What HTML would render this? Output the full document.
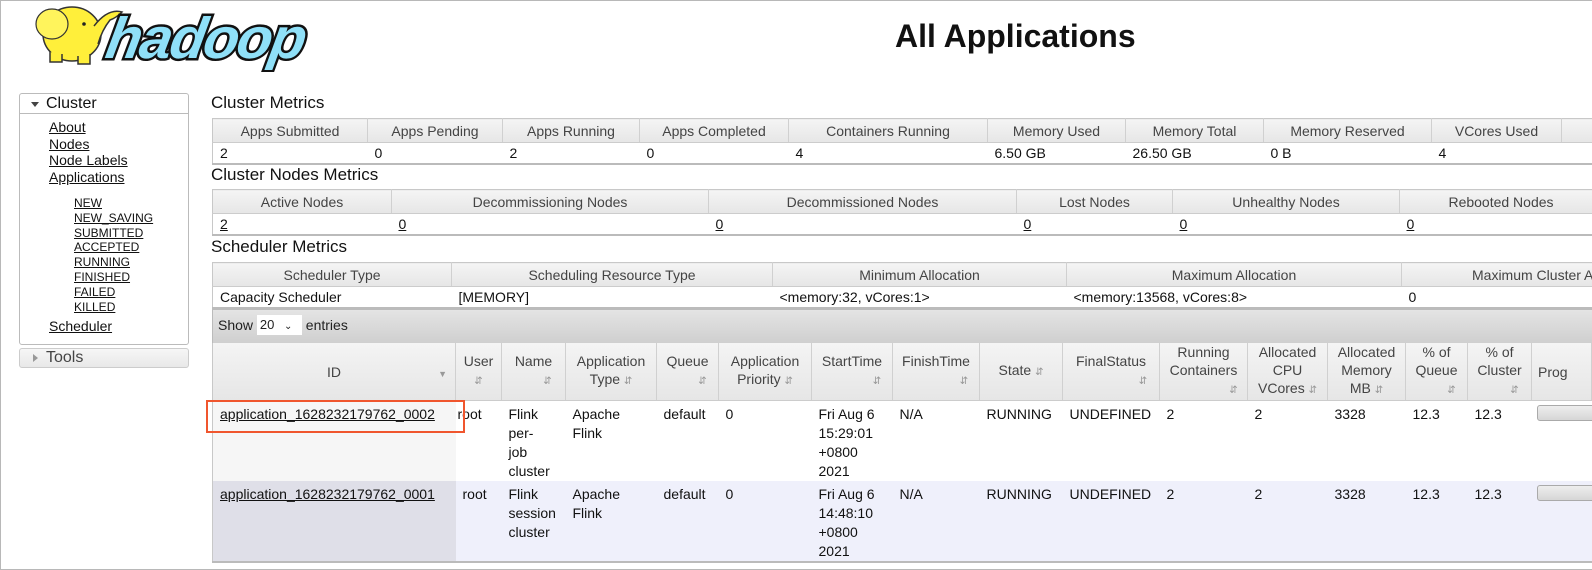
<!DOCTYPE html>
<html><head><meta charset="utf-8"><style>
*{margin:0;padding:0;box-sizing:border-box}
body{width:1592px;height:570px;overflow:hidden;background:#fff;font-family:"Liberation Sans",sans-serif;font-size:14px;color:#111;position:relative}
.frame{position:absolute;left:0;top:0;width:1592px;height:570px;border:1px solid #b8b8b8;border-right:none}
.abs{position:absolute}
a{color:#111;text-decoration:underline}
h3{position:absolute;font-weight:normal;font-size:17px;color:#111;left:211px}
table{position:absolute;border-collapse:collapse;table-layout:fixed;left:212px}
th{font-weight:normal;color:#444;background:linear-gradient(#f4f4f4,#e6e6e6);border-right:1px solid #d0d0d0;border-bottom:1px solid #ccc;text-align:center;white-space:nowrap;overflow:hidden}
td{text-align:left;padding-left:7px;white-space:nowrap;overflow:hidden;vertical-align:top}
.m{border:1px solid #c8c8c8;border-bottom:2px solid #bbb}
.m th{height:24px}
.m td{height:20px;line-height:20px}
.side{position:absolute;left:19px;top:93px;width:170px;height:252px;border:1px solid #bbb;border-radius:3px}
.side .hd{height:20px;border-bottom:1px solid #bbb;font-size:16px;padding-left:26px;line-height:19px;position:relative}
.tri{position:absolute;width:0;height:0}
.links{position:absolute;left:29px;font-size:14px;line-height:16.6px}
.sub{position:absolute;left:54px;top:102px;font-size:12px;line-height:14.8px}
.apps th{height:57px;white-space:normal;line-height:18px;position:relative;font-size:14px;vertical-align:middle;padding:0 2px}
.apps td{font-size:14px;line-height:19px;padding-top:4px;white-space:normal;padding-left:7px}
.s{font-size:9px;color:#999;position:absolute}
.ar{font-size:10px;color:#999}
</style></head><body>
<div class="frame"></div>
<!-- logo -->
<svg class="abs" style="left:22px;top:0" width="300" height="72" viewBox="0 0 300 72">
<ellipse cx="50" cy="34" rx="29" ry="27" fill="#ffef3a" stroke="#333" stroke-width="1.5"/>
<ellipse cx="30" cy="24" rx="16" ry="15" fill="#fff45c" stroke="#333" stroke-width="1.2"/>
<path d="M72 26 Q86 8 100 12 Q94 18 88 20 Q80 30 76 44" fill="#ffef3a" stroke="#333" stroke-width="1.5"/>
<path d="M28 52 L28 62 L40 62 L40 54 M56 56 L56 64 L68 64 L68 54" fill="#ffef3a" stroke="#333" stroke-width="1.5"/>
<circle cx="62" cy="24" r="1.8" fill="#222"/>
<text x="92" y="58" font-family="Liberation Sans" font-weight="bold" font-style="italic" font-size="58" fill="#8fe0f8" stroke="#111" stroke-width="5" paint-order="stroke" letter-spacing="-2" transform="skewX(-10)">hadoop</text>
</svg>
<div class="abs" style="left:895px;top:18px;font-size:32px;font-weight:bold;color:#111">All Applications</div>

<div class="side">
<div class="hd"><div class="tri" style="left:11px;top:8px;border-left:4px solid transparent;border-right:4px solid transparent;border-top:5px solid #444"></div>Cluster</div>
<div class="links" style="top:25px"><a>About</a><br><a>Nodes</a><br><a>Node Labels</a><br><a>Applications</a></div>
<div class="sub"><a>NEW</a><br><a>NEW_SAVING</a><br><a>SUBMITTED</a><br><a>ACCEPTED</a><br><a>RUNNING</a><br><a>FINISHED</a><br><a>FAILED</a><br><a>KILLED</a></div>
<div class="links" style="top:224px"><a>Scheduler</a></div>
</div>
<div class="abs" style="left:19px;top:348px;width:170px;height:20px;border:1px solid #ccc;border-radius:3px;background:linear-gradient(#f6f6f6,#e8e8e8);font-size:16px;padding-left:26px;line-height:18px;color:#444"><div class="tri" style="left:13px;top:5px;border-top:4px solid transparent;border-bottom:4px solid transparent;border-left:5px solid #999"></div>Tools</div>

<h3 style="top:93px">Cluster Metrics</h3>
<table class="m" style="top:118px;width:1390px">
<colgroup><col style="width:155px"><col style="width:135px"><col style="width:137px"><col style="width:149px"><col style="width:199px"><col style="width:138px"><col style="width:138px"><col style="width:168px"><col style="width:130px"><col></colgroup>
<tr><th>Apps Submitted</th><th>Apps Pending</th><th>Apps Running</th><th>Apps Completed</th><th>Containers Running</th><th>Memory Used</th><th>Memory Total</th><th>Memory Reserved</th><th>VCores Used</th><th></th></tr>
<tr><td>2</td><td>0</td><td>2</td><td>0</td><td>4</td><td>6.50 GB</td><td>26.50 GB</td><td>0 B</td><td>4</td><td></td></tr>
</table>

<h3 style="top:165px">Cluster Nodes Metrics</h3>
<table class="m" style="top:189px;width:1390px">
<colgroup><col style="width:179px"><col style="width:317px"><col style="width:308px"><col style="width:156px"><col style="width:227px"><col style="width:203px"></colgroup>
<tr><th>Active Nodes</th><th>Decommissioning Nodes</th><th>Decommissioned Nodes</th><th>Lost Nodes</th><th>Unhealthy Nodes</th><th>Rebooted Nodes</th></tr>
<tr><td><a>2</a></td><td><a>0</a></td><td><a>0</a></td><td><a>0</a></td><td><a>0</a></td><td><a>0</a></td></tr>
</table>

<h3 style="top:237px">Scheduler Metrics</h3>
<table class="m" style="top:262px;width:1390px">
<colgroup><col style="width:239px"><col style="width:321px"><col style="width:294px"><col style="width:335px"><col style="width:201px"></colgroup>
<tr><th>Scheduler Type</th><th>Scheduling Resource Type</th><th>Minimum Allocation</th><th>Maximum Allocation</th><th style="text-align:left;padding-left:70px">Maximum Cluster Application Priority</th></tr>
<tr><td>Capacity Scheduler</td><td>[MEMORY]</td><td>&lt;memory:32, vCores:1&gt;</td><td>&lt;memory:13568, vCores:8&gt;</td><td>0</td></tr>
</table>

<div class="abs" style="left:212px;top:309px;width:1380px;height:35px;background:linear-gradient(#e4e4e4,#cfcfcf);border:1px solid #bbb;border-right:none;font-size:14px;line-height:31px;padding-left:5px;color:#222">Show <span style="display:inline-block;background:#fff;width:45px;height:20px;line-height:20px;vertical-align:middle;padding-left:3px;font-size:13px;position:relative;top:-1px">20 <span style="font-size:10px;margin-left:6px">&#8964;</span></span> entries</div>

<table class="apps" style="top:343px;width:1380px;border-left:1px solid #c8c8c8;border-bottom:2px solid #bbb">
<colgroup><col style="width:243px"><col style="width:46px"><col style="width:64px"><col style="width:91px"><col style="width:62px"><col style="width:93px"><col style="width:81px"><col style="width:87px"><col style="width:83px"><col style="width:97px"><col style="width:88px"><col style="width:80px"><col style="width:78px"><col style="width:62px"><col style="width:64px"><col></colgroup>
<tr><th>ID<span class="s" style="right:8px;top:22px">&#9660;</span></th><th>User<br><span class="ar">&#8693;</span></th><th>Name<br><span class="ar" style="margin-left:28px">&#8693;</span></th><th>Application<br>Type <span class="ar">&#8693;</span></th><th>Queue<br><span class="ar" style="margin-left:30px">&#8693;</span></th><th>Application<br>Priority <span class="ar">&#8693;</span></th><th>StartTime<br><span class="ar" style="margin-left:50px">&#8693;</span></th><th>FinishTime<br><span class="ar" style="margin-left:56px">&#8693;</span></th><th>State <span class="ar">&#8693;</span></th><th>FinalStatus<br><span class="ar" style="margin-left:64px">&#8693;</span></th><th>Running<br>Containers<br><span class="ar" style="margin-left:60px">&#8693;</span></th><th>Allocated<br>CPU<br>VCores <span class="ar">&#8693;</span></th><th>Allocated<br>Memory<br>MB <span class="ar">&#8693;</span></th><th>% of<br>Queue<br><span class="ar" style="margin-left:30px">&#8693;</span></th><th>% of<br>Cluster<br><span class="ar" style="margin-left:30px">&#8693;</span></th><th style="text-align:left;padding-left:6px">Prog</th></tr>
<tr style="height:78px;background:#fff"><td style="background:#f6f6f6"><a>application_1628232179762_0002</a></td><td style="padding-left:2px">root</td><td>Flink<br>per-<br>job<br>cluster</td><td>Apache<br>Flink</td><td>default</td><td>0</td><td>Fri Aug 6 15:29:01 +0800 2021</td><td>N/A</td><td>RUNNING</td><td>UNDEFINED</td><td>2</td><td>2</td><td>3328</td><td>12.3</td><td>12.3</td><td><div style="margin-left:-2px;width:60px;height:16px;border:1px solid #aaa;border-radius:3px;background:linear-gradient(#eee,#d6d6d6)"></div></td></tr>
<tr style="height:78px;background:#eff0fb"><td style="background:#dfdfe8"><a>application_1628232179762_0001</a></td><td>root</td><td>Flink<br>session<br>cluster</td><td>Apache<br>Flink</td><td>default</td><td>0</td><td>Fri Aug 6 14:48:10 +0800 2021</td><td>N/A</td><td>RUNNING</td><td>UNDEFINED</td><td>2</td><td>2</td><td>3328</td><td>12.3</td><td>12.3</td><td><div style="margin-left:-2px;width:60px;height:16px;border:1px solid #aaa;border-radius:3px;background:linear-gradient(#eee,#d6d6d6)"></div></td></tr>
</table>
<div class="abs" style="left:206px;top:400px;width:259px;height:33px;border:2px solid #f0562e"></div>
</body></html>
